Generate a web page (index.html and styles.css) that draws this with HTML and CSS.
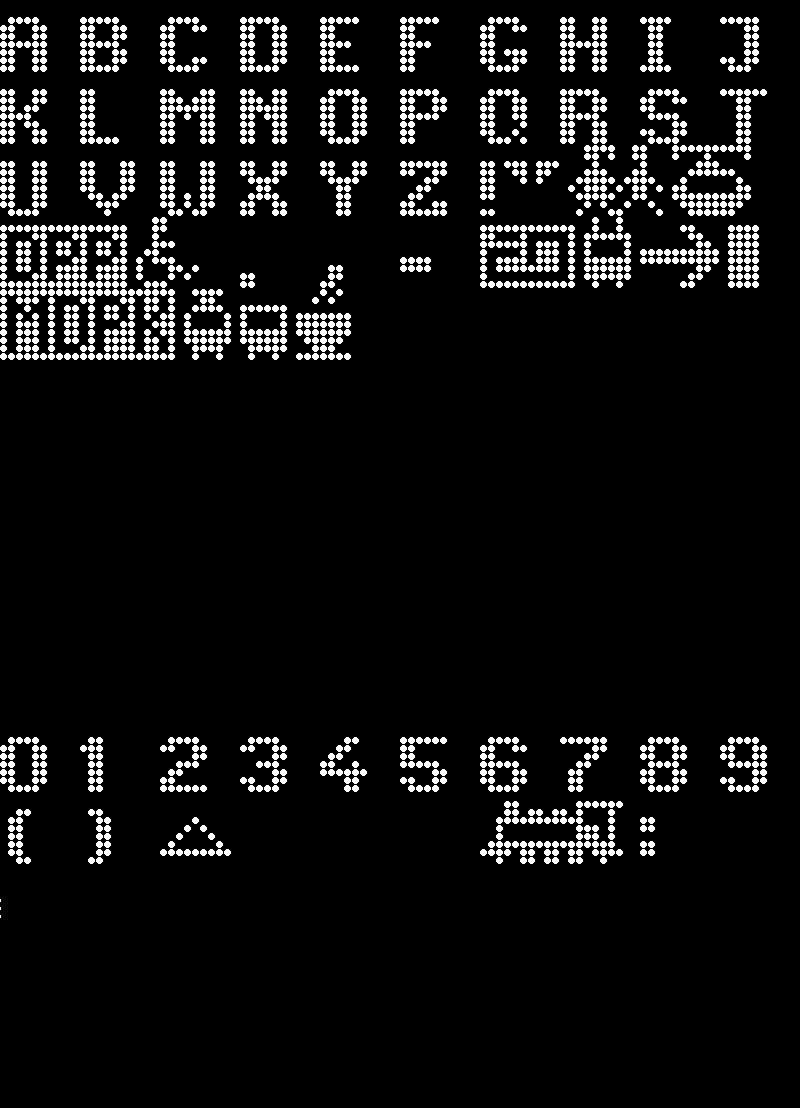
FILE: index.html
```html
<!DOCTYPE html>
<html lang="en">
<head>
<meta charset="utf-8">
<title>Dot matrix character sheet</title>
<link rel="stylesheet" href="styles.css">
</head>
<body>
<main class="sheet" id="sheet" role="img" aria-label="Dot matrix character sheet: letters, digits, punctuation and game sprites"></main>
<script src="matrix.js"></script>
</body>
</html>
```
FILE: styles.css
```css
html, body {
  margin: 0;
  height: 100%;
  background: #000;
  overflow: hidden;
}

.sheet {
  display: grid;
  grid-template-columns: repeat(100, 8px);
  grid-auto-rows: 8px;
  padding-top: 1px;
}

.cell {
  display: block;
  width: 8px;
  height: 8px;
}

/* a crisp 7px dot built from three stacked pixel runs */
.cell.on {
  background-image:
    linear-gradient(#fff, #fff),
    linear-gradient(#fff, #fff),
    linear-gradient(#fff, #fff);
  background-repeat: no-repeat;
  background-size: 7px 3px, 5px 5px, 3px 7px;
  background-position: 0 2px, 1px 1px, 2px 0;
}

/* dots of the sprite cut off by the left side of the sheet */
.cell.clipped {
  margin-left: -6px;
}
```
FILE: matrix.js
```js
const COLS = 100;
const ROWS = 115;

const FONT = {
  A: [".XXXX.", "XX..XX", "XX..XX", "XXXXXX", "XX..XX", "XX..XX", "XX..XX"],
  B: ["XXXXX.", "XX..XX", "XX..XX", "XXXXX.", "XX..XX", "XX..XX", "XXXXX."],
  C: [".XXXX.", "XX..XX", "XX....", "XX....", "XX....", "XX..XX", ".XXXX."],
  D: ["XXXXX.", "XX..XX", "XX..XX", "XX..XX", "XX..XX", "XX..XX", "XXXXX."],
  E: ["XXXXX", "XX...", "XX...", "XXXX.", "XX...", "XX...", "XXXXX"],
  F: ["XXXXX", "XX...", "XX...", "XXXX.", "XX...", "XX...", "XX..."],
  G: [".XXXX.", "XX..XX", "XX....", "XX....", "XX.XXX", "XX..XX", ".XXXX."],
  H: ["XX..XX", "XX..XX", "XX..XX", "XXXXXX", "XX..XX", "XX..XX", "XX..XX"],
  I: ["XXXX", ".XX.", ".XX.", ".XX.", ".XX.", ".XX.", "XXXX"],
  J: ["XXXXX", "...XX", "...XX", "...XX", "...XX", "XX.XX", ".XXX."],
  K: ["XX..XX", "XX..XX", "XX.XX.", "XXXX..", "XX.XX.", "XX..XX", "XX..XX"],
  L: ["XX...", "XX...", "XX...", "XX...", "XX...", "XX...", "XXXXX"],
  M: ["XX...XX", "XXX.XXX", "XXXXXXX", "XX.X.XX", "XX...XX", "XX...XX", "XX...XX"],
  N: ["XX..XX", "XXX.XX", "XXXXXX", "XX.XXX", "XX..XX", "XX..XX", "XX..XX"],
  O: [".XXXX.", "XX..XX", "XX..XX", "XX..XX", "XX..XX", "XX..XX", ".XXXX."],
  P: ["XXXXX.", "XX..XX", "XX..XX", "XXXXX.", "XX....", "XX....", "XX...."],
  Q: [".XXXX.", "XX..XX", "XX..XX", "XX..XX", "XX...X", "XX..X.", ".XXX.X"],
  R: ["XXXXX.", "XX..XX", "XX..XX", "XXXXX.", "XX..XX", "XX..XX", "XX..XX"],
  S: [".XXXX.", "XX..XX", "XX....", ".XXXX.", "....XX", "XX..XX", ".XXXX."],
  T: ["XXXXXX", "..XX..", "..XX..", "..XX..", "..XX..", "..XX..", "..XX.."],
  U: ["XX..XX", "XX..XX", "XX..XX", "XX..XX", "XX..XX", "XX..XX", ".XXXX."],
  V: ["XX...XX", "XX...XX", "XX...XX", "XX...XX", ".XX.XX.", "..XXX..", "...X..."],
  W: ["XX...XX", "XX...XX", "XX...XX", "XX...XX", "XX.X.XX", "XX.X.XX", ".XX.XX."],
  X: ["XX..XX", "XX..XX", ".XXXX.", "..XX..", ".XXXX.", "XX..XX", "XX..XX"],
  Y: ["XX..XX", "XX..XX", ".XXXX.", "..XX..", "..XX..", "..XX..", "..XX.."],
  Z: ["XXXXXX", "XX..XX", "...XX.", "..XX..", ".XX...", "XX..XX", "XXXXXX"],
  "!": ["XX", "XX", "XX", "XX", "XX", "..", "XX"],
  0: [".XXXX.", "XX..XX", "XX..XX", "XX..XX", "XX..XX", "XX..XX", ".XXXX."],
  1: [".XX", "XXX", ".XX", ".XX", ".XX", ".XX", ".XX"],
  2: [".XXXX.", "XX..XX", "....XX", "..XXX.", ".XX...", "XX....", "XXXXXX"],
  3: [".XXXX.", "XX..XX", "....XX", "..XXX.", "....XX", "XX..XX", ".XXXX."],
  4: ["...XX.", "..XX..", ".XX...", "XX..X.", "XXXXXX", "...XX.", "...XX."],
  5: ["XXXXXX", "XX....", "XX....", "XXXXX.", "....XX", "XX..XX", ".XXXX."],
  6: [".XXXX.", "XX..XX", "XX....", "XXXXX.", "XX..XX", "XX..XX", ".XXXX."],
  7: ["XXXXXX", "....XX", "...XX.", "..XX..", ".XX...", ".XX...", ".XX..."],
  8: [".XXXX.", "XX..XX", "XX..XX", ".XXXX.", "XX..XX", "XX..XX", ".XXXX."],
  9: [".XXXX.", "XX..XX", "XX..XX", ".XXXXX", "....XX", "XX..XX", ".XXXX."]
};

const TEXT_LINES = [
  { row: 2, chars: "ABCDEFGHIJ" },
  { row: 11, chars: "KLMNOPQRST" },
  { row: 20, chars: "UVWXYZ!" },
  { row: 92, chars: "0123456789" }
];

/* sprites and punctuation, as "row: column runs" */
const RUNS = {
  18: "73-76,79,80,84-93",
  19: "73,74,76,79,80,84,88,93",
  20: "63-65,67-69,74,80,87-89",
  21: "64,65,67,68,73-75,79,80,86-91",
  22: "65,67,72-76,78-81,85,92",
  23: "71,73-75,77,79,80,82,84,85,92,93",
  24: "72-76,79,80,84-93",
  25: "73,75,78,81,85-92",
  26: "72,76,77,82,86-91",
  27: "19,20,74,77",
  28: "0-15,19,20,60-71,74,77,85,86,91-94",
  29: "0,4,5,9,10,14,15,19,60,61,65,71,73-78,86,87,91-94",
  30: "0,2,3,5,7,8,10,12,13,15,19-21,60-65,67-69,71,73,78,87,88,91-94",
  31: "0,2,3,5,7,8,10,12,13,15,18,19,60,65,67-69,71,73,78,80-89,91-94",
  32: "0,2,3,5,9,10,14,15,17,19-21,50-53,60,62-65,67-69,71,73-78,80-89,91-94",
  33: "0,2,3,5,7-10,12-15,17,21,22,24,41,42,50-53,60,62-69,71,73-78,87,88,91-94",
  34: "0,4,5,7-10,12-15,17,21,23,30,31,41,42,60,71,73-78,86,87,91-94",
  35: "0-15,18-20,30,31,40,41,60-71,74,77,85,86,91-94",
  36: "0-21,24-27,40,42",
  37: "0,2-4,6,10,11,15,16,18,19,21,25,26,39,41",
  38: "0,3,6,8,9,11,13,14,16,18,19,21,24-27,30-35",
  39: "0,2,4,6,8,9,11,13,14,16,18,20,21,23,28,30,35,37-43",
  40: "0,2-4,6,8,9,11,15,16,19-21,23,28,30,35,37-43",
  41: "0,2-4,6,8,9,11,13-16,18,20,21,23-28,30-35,37-43",
  42: "0,2-4,6,8,9,11,13-16,18,19,21,23-28,30-35,38-42",
  43: "0,2-4,6,10,11,13-16,18,19,21,24-27,31-35,39-41",
  44: "0-21,24,27,31,34,37-43",
  100: "63,64,72-77",
  101: "2,3,11,12,63,64,66,67,69,70,72,76",
  102: "1,2,12,13,24,62-72,76,80,81",
  103: "1,2,12,13,23,25,62,72-74,76,80,81",
  104: "1,2,12,13,22,26,62,72-74,76",
  105: "1,2,12,13,21,27,61-76,80,81",
  106: "1,2,12,13,20-28,60-63,65,66,68,69,71,72,74-77,80,81",
  107: "2,3,11,12,62,65,66,68,69,71,72,75"
};

const CLIPPED_ROWS = [112, 113, 114];

const lit = Array.from({ length: ROWS }, () => new Array(COLS).fill(false));

TEXT_LINES.forEach(({ row, chars }) => {
  [...chars].forEach((ch, i) => {
    FONT[ch].forEach((line, dy) => {
      [...line].forEach((px, dx) => {
        if (px === "X") lit[row + dy][i * 10 + dx] = true;
      });
    });
  });
});

Object.entries(RUNS).forEach(([row, spec]) => {
  spec.split(",").forEach((run) => {
    const [from, to = from] = run.split("-").map(Number);
    for (let c = from; c <= to; c++) lit[row][c] = true;
  });
});

const frag = document.createDocumentFragment();
lit.forEach((line, r) => {
  line.forEach((on, c) => {
    const cell = document.createElement("span");
    cell.className = "cell";
    if (on) cell.classList.add("on");
    if (c === 0 && CLIPPED_ROWS.includes(r)) cell.classList.add("on", "clipped");
    frag.appendChild(cell);
  });
});
document.getElementById("sheet").appendChild(frag);
```
